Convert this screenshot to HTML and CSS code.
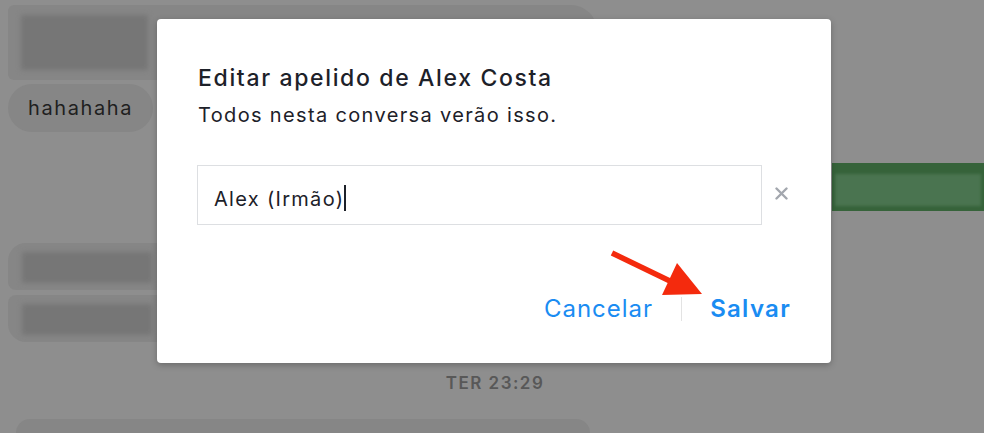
FILE: index.html
```html
<!DOCTYPE html>
<html lang="pt">
<head>
<meta charset="utf-8">
<title>Editar apelido</title>
<link rel="stylesheet" href="styles.css">
</head>
<body>
<div class="chat">
  <div class="bubble bubble-top"><div class="blur blur-top"></div></div>
  <div class="bubble bubble-text">hahahaha</div>
  <div class="bubble-green"><div class="blur-green"></div></div>
  <div class="bubble bubble-left"><div class="blur blur-row"></div></div>
  <div class="bubble bubble-left second"><div class="blur blur-row"></div></div>
  <div class="timestamp">TER 23:29</div>
  <div class="bubble bubble-bottom"></div>
</div>

<div class="modal">
  <h1 class="modal-title">Editar apelido de Alex Costa</h1>
  <p class="modal-sub">Todos nesta conversa verão isso.</p>
  <div class="input-row">
    <div class="input"><span class="input-text">Alex (Irmão)</span><span class="caret"></span></div>
    <svg class="clear" width="13" height="13" viewBox="0 0 13 13"><path d="M1.5 1.5 L11.5 11.5 M11.5 1.5 L1.5 11.5" stroke="#a3a7ae" stroke-width="2.4" stroke-linecap="round"/></svg>
  </div>
  <div class="actions">
    <span class="btn cancel">Cancelar</span>
    <span class="sep"></span>
    <span class="btn save">Salvar</span>
  </div>
</div>

<svg class="arrow" width="110" height="60" viewBox="600 245 110 60">
  <line x1="612" y1="253" x2="672" y2="282" stroke="#f42a0d" stroke-width="5.5" stroke-linecap="butt"/>
  <polygon points="662,295 677,263 702,294" fill="#f42a0d"/>
</svg>
</body>
</html>
```

FILE: styles.css
```css
* { box-sizing: border-box; }
html, body { margin: 0; padding: 0; }
body {
  width: 984px;
  height: 433px;
  overflow: hidden;
  background: #8e8e8e;
  font-family: Inter, "Liberation Sans", sans-serif;
  position: relative;
}
.chat {
  display: flex;
  flex-direction: column;
  padding-top: 5px;
}
.bubble {
  background: #868686;
  border-radius: 20px;
  margin-left: 8px;
}
.bubble-top {
  width: 589px;
  height: 75px;
  border-radius: 6px 26px 20px 6px;
  padding: 10px 0 0 13px;
}
.blur {
  background: #767676;
  filter: blur(2.5px);
}
.blur-top { width: 127px; height: 55px; }
.bubble-text {
  margin-top: 4px;
  width: 145px;
  height: 48px;
  border-radius: 24px;
  padding-left: 20px;
  display: flex;
  align-items: center;
  font-size: 20px;
  letter-spacing: 1.6px;
  color: #1f1f1f;
}
.bubble-green {
  margin-top: 31px;
  align-self: flex-end;
  width: 152px;
  height: 48px;
  background: #36633a;
  padding: 11px 3px 0 3px;
}
.blur-green {
  height: 32px;
  background: #4a7450;
  filter: blur(1.5px);
}
.bubble-left {
  margin-top: 32px;
  width: 300px;
  height: 47px;
  border-radius: 18px 0 0 8px;
  padding: 9px 0 0 14px;
}
.bubble-left.second {
  margin-top: 5px;
  border-radius: 8px 0 0 18px;
}
.blur-row { width: 130px; height: 31px; }
.timestamp {
  margin-top: 31px;
  height: 20px;
  text-align: center;
  padding-left: 6px;
  font-size: 17px;
  font-weight: 600;
  letter-spacing: 1.5px;
  color: #585858;
  line-height: 20px;
}
.bubble-bottom {
  margin-top: 26px;
  margin-left: 16px;
  width: 574px;
  height: 14px;
  border-radius: 20px 20px 0 0;
}

.modal {
  position: absolute;
  left: 157px;
  top: 19px;
  width: 674px;
  height: 344px;
  background: #fff;
  border-radius: 4px;
  box-shadow: 0 2px 6px rgba(0,0,0,0.25);
  padding: 46px 43px 0 41px;
  display: flex;
  flex-direction: column;
  color: #1d2129;
}
.modal-title {
  margin: 0;
  font-size: 23px;
  line-height: 27px;
  font-weight: 500;
  letter-spacing: 1.65px;
}
.modal-sub {
  margin: 11px 0 0;
  font-size: 20px;
  line-height: 24px;
  font-weight: 400;
  letter-spacing: 1.35px;
}
.input-row {
  margin-top: 38px;
  display: flex;
  align-items: center;
  gap: 13px;
  margin-left: -1px;
}
.input {
  width: 565px;
  height: 60px;
  border: 1px solid #dddfe2;
  padding: 21px 0 0 16px;
  display: flex;
  align-items: flex-start;
  font-size: 20px;
  line-height: 24px;
  letter-spacing: 1.3px;
  color: #1d2129;
}
.caret {
  display: inline-block;
  width: 2px;
  height: 26px;
  background: #1d2129;
  margin-left: 0;
  margin-top: -2px;
}
.clear { margin-top: -4px; }
.actions {
  margin-top: 70px;
  display: flex;
  justify-content: flex-end;
  align-items: center;
}
.btn {
  font-size: 24px;
  line-height: 28px;
  color: #1a8cf2;
  letter-spacing: 1.3px;
}
.cancel { letter-spacing: 1px; }
.save { font-weight: 600; margin-right: -3px; }
.sep {
  width: 1px;
  height: 24px;
  background: #e3e3e3;
  margin: 0 28px 0 28px;
}
.arrow {
  position: absolute;
  left: 600px;
  top: 245px;
}
```
